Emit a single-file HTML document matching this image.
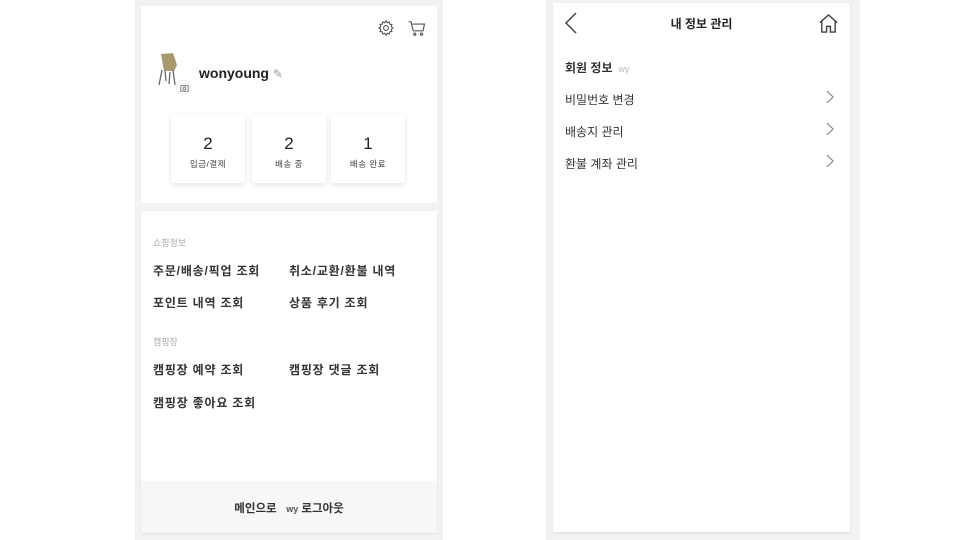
<!DOCTYPE html>
<html><head><meta charset="utf-8"><style>
*{margin:0;padding:0;box-sizing:border-box}
body{width:960px;height:540px;background:#fff;position:relative;overflow:hidden;font-family:"Liberation Sans","Noto Sans CJK KR",sans-serif;color:#222}
.abs{position:absolute}
.lbg{left:135px;top:0;width:308px;height:540px;background:#f1f2f2}
.card1{left:141px;top:6px;width:296px;height:197px;background:#fff}
.card2{left:141px;top:211px;width:296px;height:322px;background:#fff;box-shadow:0 1px 2px rgba(0,0,0,.08)}
.foot{left:0;bottom:0;width:296px;height:52px;background:#f7f7f7;text-align:center;line-height:56px;font-size:11.5px;font-weight:bold;color:#333}
.stat{top:108px;width:74px;height:69px;background:#fff;box-shadow:0 2px 6px rgba(0,0,0,.10);text-align:center;border-radius:3px}
.stat b{display:block;font-weight:normal;font-size:17px;margin-top:20px;color:#222}
.stat span{display:block;font-size:8.5px;color:#444;margin-top:4px;letter-spacing:0.5px}
.sec{font-size:9px;color:#aaa}
.it{font-size:12px;font-weight:bold;color:#333;letter-spacing:0.8px}
.rbg{left:546px;top:0;width:314px;height:540px;background:#f1f2f2}
.rcard{left:553px;top:3px;width:297px;height:529px;background:#fff;box-shadow:0 1px 2px rgba(0,0,0,.1)}
.row{left:12px;font-size:12px;color:#333}
</style></head><body>
<div class="abs lbg"></div>
<div class="abs card1">
 <svg class="abs" style="left:236px;top:13px" width="18" height="18" viewBox="0 0 24 24" fill="none" stroke="#555" stroke-width="1.5"><circle cx="12" cy="12" r="3.2"/><path d="M12 2.5l1.6 2.4 2.8-.8.6 2.8 2.8.7-.8 2.8 2.4 1.6-2.4 1.6.8 2.8-2.8.7-.6 2.8-2.8-.8L12 21.5l-1.6-2.4-2.8.8-.6-2.8-2.8-.7.8-2.8L2.5 12l2.4-1.6-.8-2.8 2.8-.7.6-2.8 2.8.8z"/></svg>
 <svg class="abs" style="left:267px;top:14px" width="18" height="17" viewBox="0 0 24 22" fill="none" stroke="#555" stroke-width="1.5"><path d="M1 2h3l3 12h13l2-9H6"/><circle cx="9" cy="18.5" r="1.5"/><circle cx="18" cy="18.5" r="1.5"/></svg>
 <svg class="abs" style="left:17px;top:46px" width="22" height="36" viewBox="0 0 22 36"><path d="M3 2l12-1 4 12-3 6H6z" fill="#a89a6e"/><path d="M4 18l-3 15M15 18l2 15M7 19l1 10M12 20l-1 12" stroke="#666" stroke-width="1.3"/></svg>
 <div class="abs" style="left:35px;top:74px;width:15px;height:15px;border-radius:50%;background:#fff;border:1px solid #eee"><svg width="13" height="13" viewBox="0 0 14 14" style="margin:0 0 0 1px"><rect x="3" y="5" width="8" height="6" fill="none" stroke="#777" stroke-width="1"/><circle cx="7" cy="8" r="1.5" fill="none" stroke="#777"/></svg></div>
 <div class="abs" style="left:58px;top:59px;font-size:14px;font-weight:bold;color:#222">wonyoung <span style="color:#999;font-weight:normal;font-size:12px">✎</span></div>
 <div class="abs stat" style="left:30px"><b>2</b><span>입금/결제</span></div>
 <div class="abs stat" style="left:111px"><b>2</b><span>배송 중</span></div>
 <div class="abs stat" style="left:190px"><b>1</b><span>배송 완료</span></div>
</div>
<div class="abs card2">
 <div class="abs sec" style="left:12px;top:25px">쇼핑정보</div>
 <div class="abs it" style="left:12px;top:51px">주문/배송/픽업 조회</div>
 <div class="abs it" style="left:148px;top:51px">취소/교환/환불 내역</div>
 <div class="abs it" style="left:12px;top:83px">포인트 내역 조회</div>
 <div class="abs it" style="left:148px;top:83px">상품 후기 조회</div>
 <div class="abs sec" style="left:12px;top:124px">캠핑장</div>
 <div class="abs it" style="left:12px;top:150px">캠핑장 예약 조회</div>
 <div class="abs it" style="left:148px;top:150px">캠핑장 댓글 조회</div>
 <div class="abs it" style="left:12px;top:183px">캠핑장 좋아요 조회</div>
 <div class="abs foot">메인으로 &nbsp; <span style="font-size:9px;color:#555">wy</span> 로그아웃</div>
</div>
<div class="abs rbg"></div>
<div class="abs rcard">
 <svg class="abs" style="left:12px;top:9px" width="12" height="22" viewBox="0 0 12 22" fill="none" stroke="#444" stroke-width="1.5"><path d="M11 1L1 11l10 10"/></svg>
 <div class="abs" style="left:0;width:297px;top:12px;text-align:center;font-size:12px;font-weight:bold;color:#222">내 정보 관리</div>
 <svg class="abs" style="left:265px;top:10px" width="21" height="21" viewBox="0 0 22 22" fill="none" stroke="#444" stroke-width="1.5"><path d="M2 10L11 2l9 8M4 8v12h5v-6h4v6h5V8"/></svg>
 <div class="abs row" style="top:56px;font-weight:bold;font-size:12px">회원 정보 <span style="color:#bbb;font-weight:normal;font-size:9px">&nbsp;wy</span></div>
 <div class="abs row" style="top:88px">비밀번호 변경</div>
 <div class="abs row" style="top:120px">배송지 관리</div>
 <div class="abs row" style="top:152px">환불 계좌 관리</div>
 <svg class="abs" style="left:273px;top:87px" width="8" height="14" viewBox="0 0 8 14" fill="none" stroke="#888" stroke-width="1.2"><path d="M1 1l6 6-6 6"/></svg>
 <svg class="abs" style="left:273px;top:119px" width="8" height="14" viewBox="0 0 8 14" fill="none" stroke="#888" stroke-width="1.2"><path d="M1 1l6 6-6 6"/></svg>
 <svg class="abs" style="left:273px;top:151px" width="8" height="14" viewBox="0 0 8 14" fill="none" stroke="#888" stroke-width="1.2"><path d="M1 1l6 6-6 6"/></svg>
</div>
</body></html>
